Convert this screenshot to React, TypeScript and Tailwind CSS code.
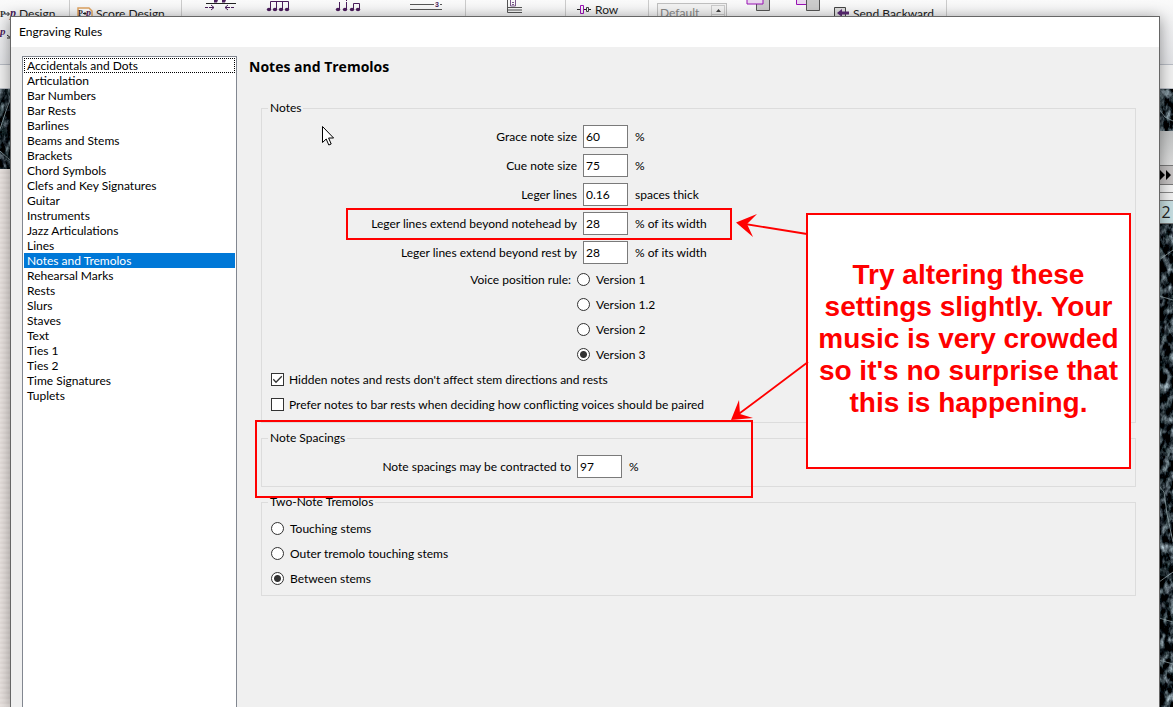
import { useState } from 'react';

type Option = { value: string; label: string };

const categories = [
  'Accidentals and Dots', 'Articulation', 'Bar Numbers', 'Bar Rests', 'Barlines', 'Beams and Stems', 'Brackets',
  'Chord Symbols', 'Clefs and Key Signatures', 'Guitar', 'Instruments', 'Jazz Articulations', 'Lines',
  'Notes and Tremolos', 'Rehearsal Marks', 'Rests', 'Slurs', 'Staves', 'Text', 'Ties 1', 'Ties 2',
  'Time Signatures', 'Tuplets',
];

const noteFields = [
  { id: 'grace', label: 'Grace note size', value: '60', suffix: '%' },
  { id: 'cue', label: 'Cue note size', value: '75', suffix: '%' },
  { id: 'leger', label: 'Leger lines', value: '0.16', suffix: 'spaces thick' },
  { id: 'leger-notehead', label: 'Leger lines extend beyond notehead by', value: '28', suffix: '% of its width' },
  { id: 'leger-rest', label: 'Leger lines extend beyond rest by', value: '28', suffix: '% of its width' },
];

const voiceRules: Option[] = [
  { value: '1', label: 'Version 1' },
  { value: '1.2', label: 'Version 1.2' },
  { value: '2', label: 'Version 2' },
  { value: '3', label: 'Version 3' },
];

const tremoloStyles: Option[] = [
  { value: 'touching', label: 'Touching stems' },
  { value: 'outer', label: 'Outer tremolo touching stems' },
  { value: 'between', label: 'Between stems' },
];

function NumberField({ id, label, value, suffix, labelClass }: { id: string; label: string; value: string; suffix: string; labelClass: string }) {
  return (
    <div className="flex h-[23px] items-center">
      <label htmlFor={id} className={`${labelClass} shrink-0 whitespace-nowrap text-right`}>{label}</label>
      <input id={id} defaultValue={value} className="ml-[6px] h-[23px] w-[45px] border border-[#7a7a7a] bg-white px-[2px] outline-none" />
      <span className="ml-[7px] whitespace-nowrap">{suffix}</span>
    </div>
  );
}

function Radio({ name, option, checked, onSelect }: { name: string; option: Option; checked: boolean; onSelect: (v: string) => void }) {
  return (
    <label className="flex h-[25px] items-center gap-[6px] whitespace-nowrap">
      <input type="radio" name={name} value={option.value} checked={checked} onChange={() => onSelect(option.value)}
        className="size-[13px] appearance-none rounded-full border border-[#333] bg-white bg-clip-padding checked:bg-[radial-gradient(circle,#333_3px,#fff_4px)]" />
      {option.label}
    </label>
  );
}

function Check({ label, defaultChecked }: { label: string; defaultChecked?: boolean }) {
  return (
    <label className="flex h-[25px] items-center gap-[5px] whitespace-nowrap">
      <span className="relative flex">
        <input type="checkbox" defaultChecked={defaultChecked} className="peer size-[13px] appearance-none border border-[#333] bg-white" />
        <svg viewBox="0 0 13 13" className="pointer-events-none absolute inset-0 hidden size-[13px] peer-checked:block" fill="none" stroke="#333" strokeWidth="1.3">
          <path d="M2.3 6.3 5 9.2 10.8 3.2" />
        </svg>
      </span>
      {label}
    </label>
  );
}

function Group({ title, className, children }: { title: string; className: string; children: React.ReactNode }) {
  return (
    <fieldset className={`border border-[#dcdcdc] pl-[9px] ${className}`}>
      <legend className="-ml-[3px] px-[2px] leading-4">{title}</legend>
      {children}
    </fieldset>
  );
}

function Marble({ id, seed, veins }: { id: string; seed: number; veins?: string }) {
  return (
    <svg className="block size-full bg-[#05090c]">
      <filter id={id} x="0" y="0" width="100%" height="100%" colorInterpolationFilters="sRGB">
        <feTurbulence type="fractalNoise" baseFrequency="0.17 0.1" numOctaves="4" seed={seed} />
        <feColorMatrix values="1.2 .9 0 0 -.92  1.25 1 0 0 -.95  1.3 1 0 0 -.95  0 0 0 0 1" />
      </filter>
      <rect width="100%" height="100%" filter={`url(#${id})`} />
      {veins && <path d={veins} fill="none" stroke="#9fb0b5" strokeOpacity="0.75" />}
    </svg>
  );
}

function PartIcon() {
  return (
    <svg width="17" height="14" viewBox="0 0 17 14" className="shrink-0">
      <text x="0" y="10" fontSize="9" fontFamily="Liberation Serif" fontWeight="bold" fill="#333">P</text>
      <path d="M5 7h4M7.500 5l2 2-2 2" stroke="#222" fill="none" />
      <text x="10" y="10" fontSize="12" fontFamily="Liberation Serif" fontStyle="italic" fontWeight="bold" fill="#4b1d5c">p</text>
    </svg>
  );
}

function Ribbon() {
  return (
    <header className="flex h-16 shrink-0 bg-linear-to-b from-[#fafafa] to-[#e2e3e6] text-[#222]">
      <div className="w-[70px] shrink-0 overflow-hidden border-r border-[#ccc] pt-[6px]">
        <div className="flex items-center gap-[2px]"><PartIcon />Design</div>
        <svg width="12" height="14" viewBox="0 0 12 14" className="mt-1">
          <text x="0" y="9" fontSize="11" fontFamily="Liberation Serif" fontStyle="italic" fontWeight="bold" fill="#4b1d5c">p</text>
          <path d="M7 9l4 3M11 8v4H7" stroke="#222" fill="none" />
        </svg>
      </div>
      <div className="flex w-[112px] shrink-0 items-start border-r border-[#ccc] pl-[7px] pt-[6px]">
        <svg width="16" height="14" className="mr-[3px] mt-px shrink-0">
          <path d="M1 14V1h11l3 3v10" fill="#fff" stroke="#e0a460" strokeWidth="1.500" />
          <text x="1" y="9" fontSize="8" fontFamily="Liberation Serif" fontWeight="bold" fill="#333">P</text>
          <path d="M6 6.500h3M7.500 5l1.500 1.500L7.500 8" stroke="#222" fill="none" />
          <text x="9" y="9" fontSize="10" fontFamily="Liberation Serif" fontStyle="italic" fontWeight="bold" fill="#4b1d5c">p</text>
        </svg>
        Score Design
      </div>
      <div className="flex w-[284px] shrink-0 border-r border-[#ccc]">
        <svg width="284" height="16" fill="#4b1d5c" stroke="#4b1d5c">
          <path d="M24 3.500h30" stroke="#222" />
          <path d="M32 0h4l-1 2.500h-3zM40 0h4l-1 2.500h-3z" stroke="none" />
          <path d="M23 7.500h3m1 0h5m-3-2.500 3 2.500-3 2.500M52 7.500h-3m-1 0h-5m3-2.500-3 2.500 3 2.500" fill="none" />
          <path d="M88.500 9V1.500h18V9M94.500 9V1.500M100.500 9V1.500" fill="none" />
          <path d="M157.500 9V2M164.500 9V2M171.500 9V3.500h6V9M164 .5h1" fill="none" />
          <g stroke="none">
            <ellipse cx="87" cy="9.500" rx="2.200" ry="1.700" /><ellipse cx="93" cy="9.500" rx="2.200" ry="1.700" />
            <ellipse cx="99" cy="9.500" rx="2.200" ry="1.700" /><ellipse cx="105" cy="9.500" rx="2.200" ry="1.700" />
            <ellipse cx="156" cy="9.500" rx="2.200" ry="1.700" /><ellipse cx="163" cy="9.500" rx="2.200" ry="1.700" />
            <ellipse cx="170" cy="9.500" rx="2.200" ry="1.700" /><ellipse cx="176" cy="9.500" rx="2.200" ry="1.700" />
            <text x="253" y="7" fontSize="7" fontFamily="Liberation Sans" fontWeight="bold">3</text>
          </g>
          <path d="M228 4.500h24M258 4.500h2M228 9.500h32" stroke="#555" />
        </svg>
      </div>
      <div className="w-[100px] shrink-0 border-r border-[#ccc] pl-[41px]">
        <svg width="16" height="14" fill="none" stroke="#555">
          <path d="M.5 0v12.500H15M1 7.500h14M1 10h14" />
          <path d="M3.500 0v6h5V0M5 2.500h2M5 4.500h2" stroke="#7b5a8c" />
        </svg>
      </div>
      <div className="flex w-[83px] shrink-0 items-start gap-1 border-r border-[#ccc] pl-[11px] pt-[2px]">
        <svg width="14" height="14" fill="none" className="mt-px">
          <path d="M0 6.500h3m4 0h2m3 0h2" stroke="#222" />
          <path d="M3.500 2.500h3v8h-3z" stroke="#9a12b5" />
          <path d="M9.500 4.500h2v4h-2z" stroke="#444" />
        </svg>
        Row
      </div>
      <div className="flex w-[298px] shrink-0 items-start border-r border-[#ccc] pl-2">
        <div className="mt-[3px] flex h-5 w-[70px] justify-between border border-[#c0c0c0] bg-[#f3f3f3] pl-[2px] pt-px text-[#888]">
          Default
          <svg width="14" height="16" className="mr-px border border-[#ccc]"><path d="M4 6l2.500-3L9 6zM4 11h5l-2.500 3z" fill="#444" /><path d="M0 8.500h14" stroke="#ccc" /></svg>
        </div>
        <svg width="76" height="12" className="ml-[19px]" fill="none">
          <path d="M10.500 0v10.500h13V0" fill="#ccc" stroke="#555" />
          <path d="M1 0v4h16V0" fill="#ead8ef" stroke="#9a12b5" />
          <path d="M50.500 0v4.500h12V0" fill="#ead8ef" stroke="#9a12b5" />
          <path d="M60.500 0v10.500h13V0" fill="#ccc" stroke="#555" />
        </svg>
        <svg width="15" height="15" className="ml-[12px] mt-[7px]">
          <path d="M.5.5h11v14H.5z" fill="#ddd" stroke="#444" />
          <path d="M3 6l5-4v2.500h7v3H8V10z" fill="#5b2a75" />
        </svg>
        <span className="ml-1 mt-[6px] whitespace-nowrap">Send Backward</span>
      </div>
    </header>
  );
}

function Backdrop() {
  return (
    <div className="flex h-full flex-col">
      <Ribbon />
      <div className="h-[25px] shrink-0 border-y border-[#b8bcc4] bg-[#f0f0f0]" />
      <div className="flex min-h-0 flex-1 justify-between">
        <div className="flex w-[11px] flex-col">
          <div className="h-20"><Marble id="marble-left" seed={4} veins="M0 40 6 22 11 8M0 62l11 10" /></div>
          <div className="flex-1 bg-[repeating-linear-gradient(#ece6e3_0_2px,#e6dfdc_3px_5px)]" />
        </div>
        <div className="flex w-[14px] flex-col">
          <div className="h-[42px]"><Marble id="marble-top" seed={8} veins="M0 20 6 28 14 32" /></div>
          <div className="h-[34px] bg-linear-to-b from-[#bfc1c1] to-[#dcdcdc]" />
          <div className="flex h-5 items-center border-y border-[#777] bg-[#c3c0c0]">
            <svg width="14" height="12"><path d="M1 1l5 5-5 5zM7 1l5 5-5 5z" fill="#000" /></svg>
          </div>
          <div className="my-[7px] h-px bg-[#888]" />
          <div className="flex h-6 shrink-0 items-center justify-center border-y border-[#777] bg-[#c5dcdf] font-['Open_Sans',sans-serif] text-base leading-5 text-[#222]">2</div>
          <div className="flex-1"><Marble id="marble-right" seed={12} veins="M0 36 14 26M0 72 14 76M0 262 5 268 8 290 14 318M0 358 14 348M0 394 14 398M0 436 14 440" /></div>
        </div>
      </div>
    </div>
  );
}

// Callout, frames and arrows drawn on top of the dialog
function Annotations() {
  return (
    <div className="pointer-events-none absolute inset-0">
      <div className="absolute left-[346px] top-[208px] h-8 w-[386px] border-2 border-[#f00]" />
      <div className="absolute left-[255px] top-[420px] h-[78px] w-[498px] border-2 border-[#f00]" />
      <p className="absolute left-[806px] top-[213px] flex h-[256px] w-[325px] items-center justify-center border-2 border-[#f00] bg-white pb-1 text-center font-['Liberation_Sans',sans-serif] text-[28px] font-bold leading-8 text-[#f00]">
        <span>Try altering these<br />settings slightly. Your<br />music is very crowded<br />so it's no surprise that<br />this is happening.</span>
      </p>
      <svg className="absolute left-[730px] top-[210px]" width="80" height="212" fill="#f00" stroke="#f00">
        <path d="M77 24 12 13.500M78 152 6 206" strokeWidth="1.800" />
        <path d="M6 12.500 27 4 17 14 23 27zM1 210 9 190 10 204 23 208z" stroke="none" />
      </svg>
      <svg className="absolute left-[322px] top-[126px]" width="13" height="20" fill="#fff" stroke="#000">
        <path d="M.5.5v16l3.700-3.500 2.600 6 2.400-1-2.600-6h5z" />
      </svg>
    </div>
  );
}

export default function App() {
  const [category, setCategory] = useState('Notes and Tremolos');
  const [voiceRule, setVoiceRule] = useState('3');
  const [tremolo, setTremolo] = useState('between');

  return (
    <div className="relative h-screen overflow-hidden bg-[#f0f0f0] font-['Lato',sans-serif] text-[12px] leading-4 text-black">
      <Backdrop />

      <div role="dialog" aria-label="Engraving Rules"
        className="absolute inset-x-0 bottom-0 top-4 ml-[10px] mr-[13px] flex flex-col border border-b-0 border-[#666] bg-[#f0f0f0] shadow-[0_2px_14px_rgba(0,0,0,0.4)]">
        <div className="flex h-[30px] shrink-0 items-center bg-white pl-2">Engraving Rules</div>

        <div className="flex min-h-0 flex-1 pl-[11px] pt-[9px]">
          <ul className="w-[215px] shrink-0 border border-b-0 border-[#828790] bg-white p-px">
            {categories.map((name, i) => (
              <li key={name}>
                <button onClick={() => setCategory(name)}
                  className={`block h-[15px] w-full pl-[3px] text-left leading-[15px] ${
                    name === category ? 'bg-[#0078d7] text-white' : ''
                  } ${i === 0 ? 'outline-1 -outline-offset-1 outline-dotted outline-black' : ''}`}>
                  {name}
                </button>
              </li>
            ))}
          </ul>

          <main className="min-w-0 flex-1 pl-3 pr-[23px] pt-px">
            <h1 className="font-['Open_Sans',sans-serif] text-[14px] font-bold leading-5">Notes and Tremolos</h1>

            <div className="ml-3 mt-[23px] flex flex-col gap-[7px]">
              <Group title="Notes" className="pb-[5px] pt-[9px]">
                <div className="flex flex-col gap-[6px]">
                  {noteFields.map((f) => <NumberField key={f.id} {...f} labelClass="w-[306px]" />)}
                </div>
                <div className="mt-[3px] flex" role="radiogroup" aria-labelledby="voice-rule">
                  <span id="voice-rule" className="mr-[6px] w-[300px] shrink-0 text-right leading-[25px]">Voice position rule:</span>
                  <div>
                    {voiceRules.map((o) => <Radio key={o.value} name="voice" option={o} checked={voiceRule === o.value} onSelect={setVoiceRule} />)}
                  </div>
                </div>
                <Check label="Hidden notes and rests don't affect stem directions and rests" defaultChecked />
                <Check label="Prefer notes to bar rests when deciding how conflicting voices should be paired" />
              </Group>

              <Group title="Note Spacings" className="pb-2 pt-[9px]">
                <NumberField id="spacing" label="Note spacings may be contracted to" value="97" suffix="%" labelClass="w-[300px]" />
              </Group>

              <Group title="Two-Note Tremolos" className="pb-1 pt-[6px]">
                {tremoloStyles.map((o) => <Radio key={o.value} name="tremolo" option={o} checked={tremolo === o.value} onSelect={setTremolo} />)}
              </Group>
            </div>
          </main>
        </div>
      </div>

      <Annotations />
    </div>
  );
}
